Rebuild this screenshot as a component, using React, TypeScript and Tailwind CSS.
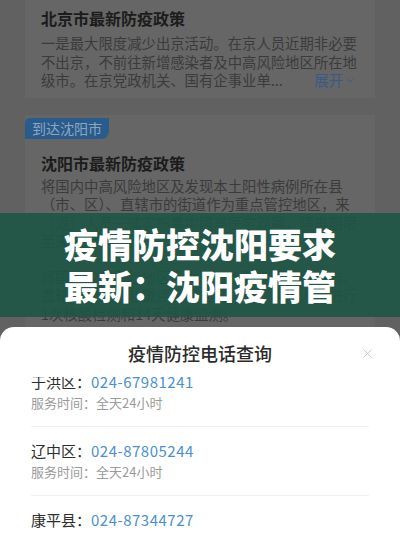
import { X, ChevronDown } from "lucide-react";

const contacts = [
  { area: "于洪区", phone: "024-67981241" },
  { area: "辽中区", phone: "024-87805244" },
  { area: "康平县", phone: "024-87344727" },
];

function PolicyLines({ lines }: { lines: string[] }) {
  return (
    <div className="text-[14.36px] leading-[18.5px] text-[#3b3b3b]">
      {lines.map((l, i) => (
        <div key={i} className="whitespace-nowrap">
          {l}
        </div>
      ))}
    </div>
  );
}

export default function App() {
  return (
    <div className="relative h-[533px] w-[400px] overflow-hidden bg-[#616161] font-['Noto_Sans_CJK_SC',sans-serif]">
      {/* dimmed page behind the sheet */}
      <div className="flex flex-col gap-[17px]">
        <div className="mx-[25px] bg-[#666666] px-4 pb-2 pt-[7px]">
          <h3 className="text-[16px] font-bold leading-[22px] text-[#1c1c1c]">北京市最新防疫政策</h3>
          <div className="mt-[5px]">
            <PolicyLines
              lines={["一是最大限度减少出京活动。在京人员近期非必要", "不出京，不前往新增感染者及中高风险地区所在地"]}
            />
            <div className="flex items-center justify-between text-[14.36px] leading-[18.5px]">
              <span className="text-[#3b3b3b]">级市。在京党政机关、国有企事业单...</span>
              <span className="mr-[3px] flex items-center gap-[2px] text-[#39598a]">
                展开
                <ChevronDown size={11} strokeWidth={2} />
              </span>
            </div>
          </div>
        </div>

        <div className="mx-[25px] bg-[#666666] pb-6">
          <div className="inline-block h-[21px] rounded-tl-[5px] rounded-br-[8px] bg-[#2a5b8d] px-[7px] text-[14px] leading-[21px] text-[#8ea5c0]">
            到达沈阳市
          </div>
          <div className="px-4">
            <h3 className="mt-[13px] text-[16px] font-bold leading-[22px] text-[#1c1c1c]">沈阳市最新防疫政策</h3>
            <div className="mt-[3px]">
              <PolicyLines
                lines={[
                  "将国内中高风险地区及发现本土阳性病例所在县",
                  "（市、区）、直辖市的街道作为重点管控地区，来",
                  "（返）人员一律实施集中隔离医学观察，隔离期限",
                  "至来沈后满14天。",
                ]}
              />
            </div>
            <div className="mt-[17px]">
              <PolicyLines
                lines={[
                  "将国内中高风险地区及发现本土阳性病例所在市、",
                  "直辖市的其他非重点管控地区，来（返）人员进行",
                  "1次核酸检测和14天健康监测。",
                ]}
              />
            </div>
          </div>
        </div>
      </div>

      {/* headline band */}
      <div className="absolute left-0 right-0 top-[213px] flex h-[104px] flex-col items-center justify-center bg-[#1c5545]/[0.88]">
        <div className="text-[34px] font-black leading-[42px] text-white">疫情防控沈阳要求</div>
        <div className="text-[34px] font-black leading-[42px] text-white">最新：沈阳疫情管</div>
      </div>

      {/* bottom sheet */}
      <div className="absolute bottom-0 left-0 right-0 top-[327px] flex flex-col rounded-t-[14px] bg-white">
        <div className="relative h-[50px] shrink-0 pt-[13px] text-center">
          <span className="text-[18px] font-medium leading-[26px] text-[#2b2b2b]">疫情防控电话查询</span>
          <X size={15} strokeWidth={1.4} className="absolute right-[25px] top-[19px] text-[#c4c4c4]" />
        </div>
        <div className="flex-1 overflow-hidden">
          <div className="-mt-[19px]">
            {contacts.map((c) => (
              <div key={c.area} className="mx-[31px] border-b border-[#efefef] py-[13px]">
                <div className="flex text-[15px] leading-[22px]">
                  <span className="text-[#2e2e2e]">{c.area}：</span>
                  <span className="tracking-[0.5px] text-[#4a8fd0]">{c.phone}</span>
                </div>
                <div className="text-[13px] leading-[20px] text-[#9a9a9a]">服务时间：全天24小时</div>
              </div>
            ))}
          </div>
        </div>
      </div>
    </div>
  );
}
